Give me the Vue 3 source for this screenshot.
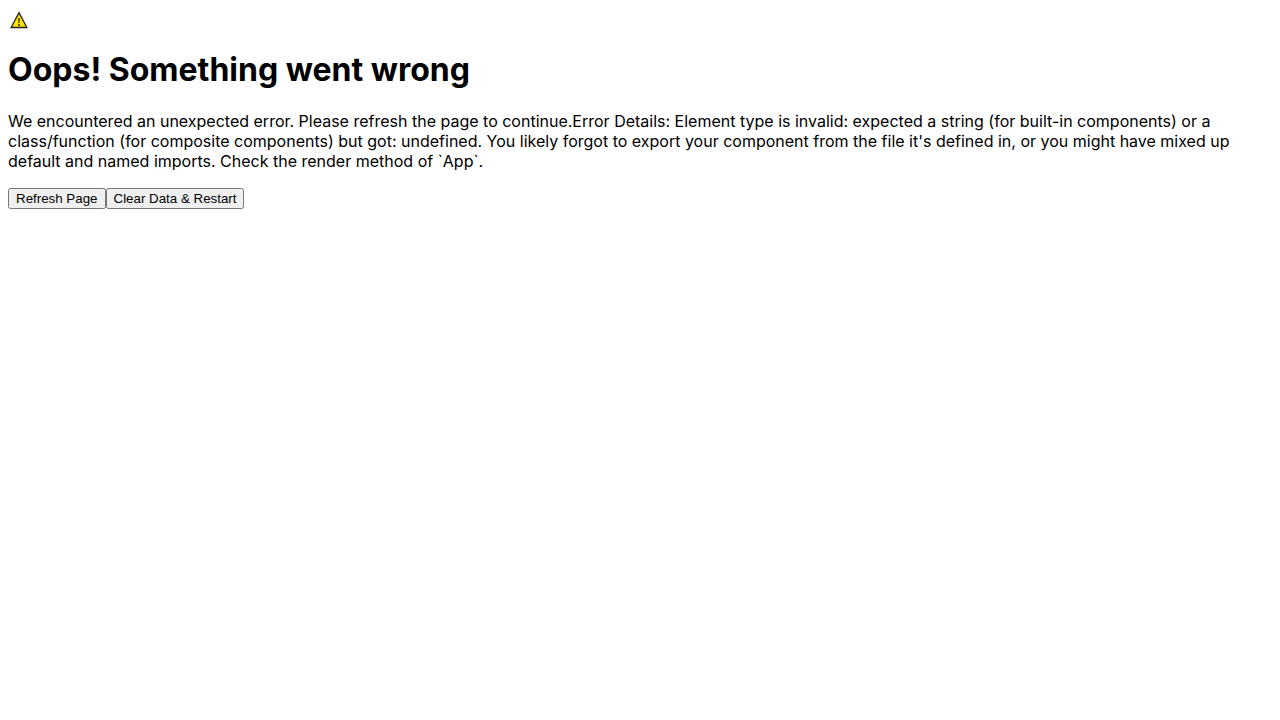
<script setup>
function refresh() {
  window.location.reload()
}

function clearAndRestart() {
  window.localStorage.clear()
  window.location.reload()
}
</script>

<template>
  <main class="page">
    <div class="icon">
      <svg width="22" height="22" viewBox="0 0 22 22" role="img" aria-label="Warning">
        <path d="M11 4.6 L18.9 19.5 H3.1 Z" fill="#fde000" stroke="#222" stroke-width="1.3" />
        <path d="M10 10 H12 L11.7 15 H10.3 Z M10 16 H12 V18 H10 Z" fill="#5c5208" />
      </svg>
    </div>
    <h1>Oops! Something went wrong</h1>
    <p>We encountered an unexpected error. Please refresh the page to continue.Error Details: Element type is invalid: expected a string (for built-in components) or a class/function (for composite components) but got: undefined. You likely forgot to export your component from the file it's defined in, or you might have mixed up default and named imports. Check the render method of `App`.</p>
    <div class="actions">
      <button type="button" @click="refresh">Refresh Page</button>
      <button type="button" @click="clearAndRestart">Clear Data &amp; Restart</button>
    </div>
  </main>
</template>

<style scoped>
.page {
  padding: 8px;
  font-family: Inter, sans-serif;
  font-size: 16px;
  line-height: 20px;
  color: #000;
}
.icon svg {
  display: block;
}
h1 {
  margin: 20px 0 22px;
  font-size: 32px;
  line-height: 39px;
  font-weight: 700;
}
p {
  margin: 0 0 17px;
}
.actions {
  display: flex;
}
</style>

<style>
body {
  background: #fff;
}
</style>
